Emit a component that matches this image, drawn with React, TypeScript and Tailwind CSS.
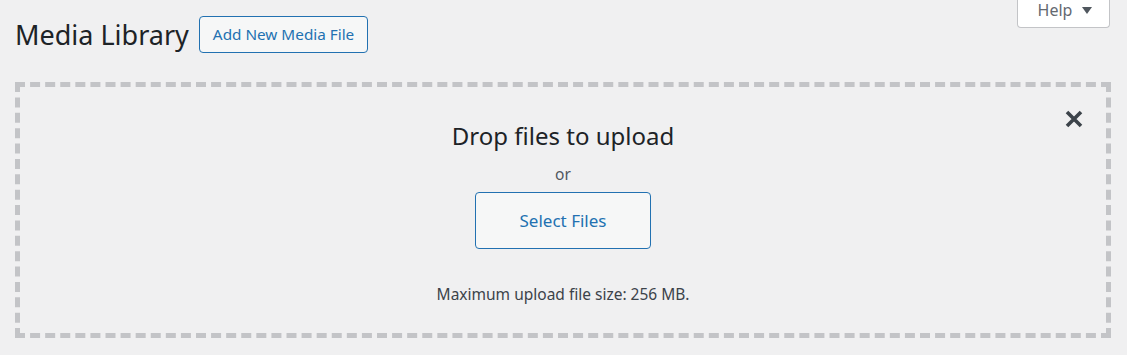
export default function App() {
  return (
    <div className="min-h-screen bg-[#f0f0f1] pl-[15px] pr-[16px] font-['Noto_Sans',sans-serif]">
      <div className="flex items-start justify-between">
        <div className="flex items-center gap-[10px] pt-[16px]">
          <h1 className="text-[27px] leading-none text-[#1d2327]">Media Library</h1>
          <button className="h-[37px] rounded-[4px] border border-[#2271b1] bg-[#f6f7f7] px-[13px] text-[15.3px] text-[#2271b1]">
            Add New Media File
          </button>
        </div>
        <button className="mr-[1px] flex h-[28px] w-[93px] items-center justify-center gap-[10px] rounded-b-[4px] border border-t-0 border-[#c3c4c7] bg-white pb-[7px] pl-[3px] text-[16px] text-[#646970]">
          Help
          <svg width="10" height="7" viewBox="0 0 10 7">
            <path d="M0 0h10L5 7z" fill="#50575e" />
          </svg>
        </button>
      </div>

      <div className="relative mt-[29px] flex h-[256px] flex-col items-center border-[5px] border-dashed border-[#c3c4c7]">
        <button className="absolute right-[23px] top-[23px]">
          <svg width="18" height="18" viewBox="0 0 18 18">
            <path d="M2 2L16 16M16 2L2 16" stroke="#3c434a" strokeWidth="3.6" />
          </svg>
        </button>
        <p className="mt-[33px] text-[24px] leading-[32px] text-[#1d2327]">Drop files to upload</p>
        <p className="mt-[12px] text-[15.5px] leading-[20px] text-[#50575e]">or</p>
        <button className="mt-[8px] h-[57px] w-[176px] rounded-[4px] border border-[#2271b1] bg-[#f6f7f7] text-[17px] text-[#2271b1]">
          Select Files
        </button>
        <p className="mt-[35px] text-[15.5px] leading-[20px] text-[#3c434a]">Maximum upload file size: 256 MB.</p>
      </div>
    </div>
  );
}
